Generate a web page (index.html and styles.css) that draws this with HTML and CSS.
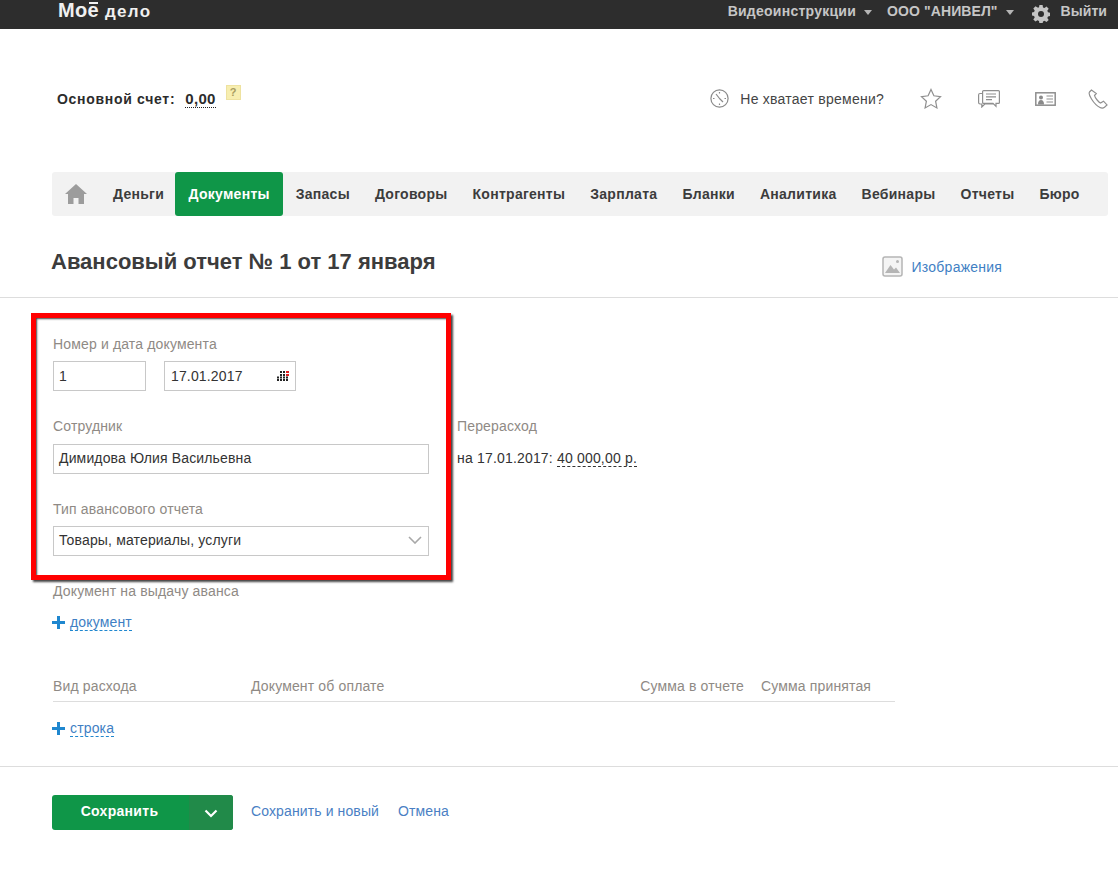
FILE: index.html
```html
<!DOCTYPE html>
<html lang="ru">
<head>
<meta charset="utf-8">
<title>Авансовый отчет</title>
<link rel="stylesheet" href="styles.css">
</head>
<body>
<header class="topbar">
  <div class="logo"><span class="logo-big">Мое</span><span class="logo-small">дело</span></div>
  <div class="top-right">
    <span class="top-link">Видеоинструкции</span><span class="caret"></span>
    <span class="top-link org">ООО "АНИВЕЛ"</span><span class="caret"></span>
    <svg class="gear" width="18" height="18" viewBox="0 0 18 18"><path fill="#c4c4c4" d="M7.400 0h3.200l.4 2.400 1.500.6 2-1.400 2.200 2.200-1.400 2 .7 1.500 2 .5v3.200l-2 .4-.7 1.500 1.400 2-2.200 2.200-2-1.400-1.500.7-.4 2.100H7.400L7 15.900l-1.500-.7-2 1.400-2.200-2.200 1.400-2-.6-1.500L0 10.600V7.400l2.100-.5.6-1.500-1.400-2 2.200-2.200 2 1.400L7 2.400z"/><circle cx="9" cy="9" r="3" fill="#2d2d2d"/></svg>
    <span class="top-link exit">Выйти</span>
  </div>
</header>

<section class="account">
  <div class="balance">
    <span class="balance-label">Основной счет:</span>
    <span class="balance-value">0,00</span>
    <span class="hint">?</span>
  </div>
  <div class="tools">
    <svg class="tool-clock" width="19" height="19" viewBox="0 0 19 19" fill="none" stroke="#8a8a8a" stroke-width="1.200"><circle cx="9.500" cy="9.500" r="8.600"/><path d="M9.500 9.500 6 5M9.500 9.500l3.500 3.500M9.500 3v1.500M3 9.500h1.500M9.500 14.500V16M14.500 9.500H16"/></svg>
    <span class="tool-text">Не хватает времени?</span>
    <svg class="tool-star" width="22" height="21" viewBox="0 0 22 21" fill="none" stroke="#8f8f8f" stroke-width="1.200"><path d="M11 1.500l2.900 6.300 6.600.8-4.900 4.600 1.300 6.700-5.900-3.300-5.900 3.300 1.300-6.700L1.500 8.600l6.600-.8z"/></svg>
    <svg class="tool-chat" width="22" height="18" viewBox="0 0 22 18" fill="none" stroke="#8f8f8f" stroke-width="1.200"><path d="M4.600 1.600A1 1 0 0 1 5.600.6h14.800a1 1 0 0 1 1 1v10.800a1 1 0 0 1-1 1h-2.400v3l-3-3H5.600a1 1 0 0 1-1-1z"/><path d="M8 4h10M8 6.800h10M8 9.600h6M4.600 3.500H2a1.400 1.400 0 0 0-1.400 1.400v7.700A1.400 1.400 0 0 0 2 14h1.800v3l3-3h8.400"/></svg>
    <svg class="tool-card" width="21" height="14" viewBox="0 0 21 14"><rect x=".8" y=".8" width="19.400" height="12.400" fill="none" stroke="#8f8f8f" stroke-width="1.500"/><circle cx="6" cy="5.500" r="2" fill="#8a8a8a"/><path fill="#8a8a8a" d="M3 12.500c0-3 1-4.500 3-4.500s3 1.500 3 4.500z"/><path stroke="#8f8f8f" d="M11.500 4h6.500M11.500 7h6.500M11.500 10h6.500"/></svg>
    <svg class="tool-phone" width="20" height="20" viewBox="0 0 20 20" fill="none" stroke="#8f8f8f" stroke-width="1.200"><path d="M3.500 1 1.500 3c-.8 1-.5 3 2 7s5.500 7 8.500 8.500c2 1 3.500.5 4.500-.3l2.500-2.300-3.500-3.700-3 1.800c-1.500-.5-5.500-5-6-7.500l1.800-2z"/></svg>
  </div>
</section>

<nav class="menu">
  <svg class="home" width="22" height="20" viewBox="0 0 22 20"><path fill="#9c9c9c" d="M11 0 22 10h-3v10h-5.500v-6h-5v6H3V10H0z"/></svg>
  <a class="menu-item">Деньги</a>
  <a class="menu-item active">Документы</a>
  <a class="menu-item">Запасы</a>
  <a class="menu-item">Договоры</a>
  <a class="menu-item">Контрагенты</a>
  <a class="menu-item">Зарплата</a>
  <a class="menu-item">Бланки</a>
  <a class="menu-item">Аналитика</a>
  <a class="menu-item">Вебинары</a>
  <a class="menu-item">Отчеты</a>
  <a class="menu-item">Бюро</a>
</nav>

<section class="title-row">
  <h1>Авансовый отчет № 1 от 17 января</h1>
  <a class="images">
    <svg width="21" height="21" viewBox="0 0 21 21"><rect x="1" y="1" width="19" height="19" rx="2" fill="#f4f4f4" stroke="#b5b5b5" stroke-width="1.500"/><path fill="#b5b5b5" d="M3 17l5.500-8 3.500 4.500 2-2 4 5.500z"/><circle cx="15.500" cy="5.500" r="1.500" fill="#b5b5b5"/></svg>
    <span>Изображения</span>
  </a>
</section>

<main class="form">
  <div class="form-group">
    <label class="field-label">Номер и дата документа</label>
    <div class="date-row">
      <div class="input input-num">1</div>
      <div class="input input-date">17.01.2017
        <svg class="cal" width="13" height="10" viewBox="0 0 13 10"><path fill="#222" d="M3 0h2v2H3zM6 0h2v2H6zM3 3h2v2H3zM6 3h2v2H6zM0 5.500h2v2H0zM3 5.500h2v2H3zM6 5.500h2v2H6zM9 5.500h2v2H9zM0 8h2v2H0zM3 8h2v2H3zM6 8h2v2H6zM9 8h2v2H9z"/><path fill="#e02020" d="M9 0h3v2H9zM9 3h3v2H9z"/></svg>
      </div>
    </div>
  </div>

  <div class="employee-row">
    <div class="employee">
      <label class="field-label">Сотрудник</label>
      <div class="input input-wide">Димидова Юлия Васильевна</div>
    </div>
    <div class="overrun">
      <label class="field-label">Перерасход</label>
      <div class="overrun-value">на 17.01.2017: <span class="dashed-dark">40 000,00 р.</span></div>
    </div>
  </div>

  <div class="type-group">
    <label class="field-label">Тип авансового отчета</label>
    <div class="input input-wide select">Товары, материалы, услуги
      <svg width="14" height="8" viewBox="0 0 14 8" fill="none" stroke="#a8a8a8" stroke-width="1.600"><path d="M1 1l6 6 6-6"/></svg>
    </div>
  </div>

  <div class="advance-group">
    <label class="field-label">Документ на выдачу аванса</label>
    <div class="add-row"><span class="plus"></span><a class="add-link">документ</a></div>
  </div>

  <div class="table-head">
    <span class="col-kind">Вид расхода</span>
    <span class="col-doc">Документ об оплате</span>
    <span class="col-sum">Сумма в отчете</span>
    <span class="col-acc">Сумма принятая</span>
  </div>
  <div class="add-row add-line"><span class="plus"></span><a class="add-link">строка</a></div>
</main>

<footer class="actions">
  <div class="save-btn">
    <span class="save-main">Сохранить</span>
    <span class="save-more"><svg width="14" height="9" viewBox="0 0 14 9" fill="none" stroke="#fff" stroke-width="2.200"><path d="M1.500 1.500 7 7l5.500-5.500"/></svg></span>
  </div>
  <a class="action-link">Сохранить и новый</a>
  <a class="action-link">Отмена</a>
</footer>

<div class="highlight"></div>
</body>
</html>
```
FILE: styles.css
```css
* { box-sizing: border-box; }
html, body { margin: 0; padding: 0; }
body {
  position: relative;
  height: 871px;
  overflow: hidden;
  background: #fff;
  color: #333;
  font: 14px/20px "Liberation Sans", Arial, sans-serif;
  letter-spacing: 0.15px;
}

.topbar {
  height: 29px;
  background: #2d2d2d;
  display: flex;
  justify-content: space-between;
  align-items: center;
  padding: 0 11px 0 58px;
}
.logo {
  display: flex;
  align-items: baseline;
  color: #f0f0f0;
  font-weight: bold;
  line-height: 22px;
  margin-top: -7px;
}
.logo-big {
  position: relative;
  font-size: 20px;
  letter-spacing: 0.3px;
}
.logo-big::before {
  content: "";
  position: absolute;
  right: 1px;
  top: -3px;
  width: 9px;
  height: 5px;
  border-top: 1px solid #f0f0f0;
  border-bottom: 2px solid #f0f0f0;
}
.logo-small {
  font-size: 17px;
  letter-spacing: 1.300px;
  margin-left: 6px;
}
.top-right { display: flex; align-items: center; margin-top: -8px; }
.top-link { color: #c6c6c6; font-weight: bold; font-size: 14px; letter-spacing: 0.25px; }
.org { margin-left: 15px; letter-spacing: 0.1px; }
.caret {
  width: 0; height: 0;
  margin: 3px 0 0 8px;
  border-left: 4px solid transparent;
  border-right: 4px solid transparent;
  border-top: 5px solid #b5b5b5;
}
.gear { margin: 6px 0 0 18px; }
.exit { margin-left: 11px; letter-spacing: 0.05px; }

.account {
  display: flex;
  justify-content: space-between;
  align-items: flex-start;
  padding: 53px 0 0 57px;
  height: 143px;
}
.balance { display: flex; align-items: flex-start; padding-top: 7px; }
.balance-label { font-weight: bold; color: #2c2c2c; letter-spacing: 0.7px; }
.balance-value {
  font-weight: bold;
  margin-left: 10px;
  color: #2c2c2c;
  font-size: 15px;
  height: 19px;
  border-bottom: 1px dotted #222;
  letter-spacing: 0.3px;
}
.hint {
  width: 15px; height: 15px;
  margin: -4px 0 0 10px;
  background: #f7eeb0;
  border: 1px solid #eee2a0;
  color: #a89c60;
  font-size: 11px;
  font-weight: bold;
  line-height: 13px;
  text-align: center;
}
.tools { display: flex; align-items: center; padding-top: 6px; margin-right: 10px; }
.tool-text { margin-left: 11px; color: #444; letter-spacing: 0.25px; }
.tool-star { margin-left: 36px; }
.tool-chat { margin-left: 36px; }
.tool-card { margin-left: 35px; }
.tool-phone { margin-left: 32px; }

.menu {
  margin: 0 10px 0 52px;
  height: 44px;
  background: #f2f2f2;
  border-radius: 3px;
  display: flex;
  align-items: stretch;
}
.home { margin: 12px 26px 0 13px; }
.menu-item {
  font-weight: bold;
  color: #3c3c3c;
  line-height: 44px;
  padding: 0 12.500px;
  letter-spacing: 0.28px;
}
.menu-item:nth-of-type(1) { padding: 0 11px 0 0; }
.menu-item.active {
  background: #0f9648;
  color: #fff;
  border-radius: 3px;
  padding: 0 13.400px;
}

.title-row {
  height: 82px;
  border-bottom: 1px solid #ddd;
  display: flex;
  padding: 33px 0 0 51px;
}
h1 {
  margin: 0;
  font-size: 22px;
  line-height: 26px;
  color: #3c3c3c;
  font-weight: bold;
  letter-spacing: 0;
}
.images {
  display: flex;
  align-items: center;
  align-self: flex-start;
  gap: 8px;
  margin: 7px 0 0 447px;
  color: #3f7fc4;
  letter-spacing: 0.25px;
}

.form { padding: 36px 0 0 53px; height: 468px; }
.field-label { display: block; color: #8f8a85; line-height: 20px; }
.date-row { display: flex; gap: 18px; margin-top: 7px; }
.input {
  height: 30px;
  border: 1px solid #c8c8c8;
  padding: 0 5px;
  line-height: 28px;
  color: #333;
  background: #fff;
}
.input-num { width: 93px; }
.input-date { width: 132px; padding-left: 6px; display: flex; justify-content: space-between; align-items: center; }
.employee-row { display: flex; margin-top: 25px; }
.employee { width: 404px; }
.input-wide { width: 376px; margin-top: 8px; line-height: 26px; }
.overrun-value { margin-top: 12px; color: #333; letter-spacing: 0.18px; }
.dashed-dark { border-bottom: 1px dashed #333; }
.type-group { margin-top: 25px; }
.select {
  display: flex;
  justify-content: space-between;
  align-items: center;
  margin-top: 7px;
  padding-right: 6px;
  padding-bottom: 2px;
}
.advance-group { margin-top: 25px; }
.add-row { display: flex; align-items: center; margin: 11px 0 0 -1px; height: 20px; }
.plus {
  width: 13px; height: 13px;
  margin-right: 5px;
  background:
    linear-gradient(#1f87cf, #1f87cf) center / 100% 3px no-repeat,
    linear-gradient(#1f87cf, #1f87cf) center / 3px 100% no-repeat;
}
.add-link { color: #3f7fc4; border-bottom: 1px dashed #1f87cf; line-height: 16px; }
.table-head {
  display: flex;
  width: 842px;
  height: 26px;
  margin-top: 44px;
  border-bottom: 1px solid #ddd;
  color: #8f8a85;
  line-height: 20px;
}
.col-kind { width: 198px; }
.col-doc { width: 376px; }
.col-sum { flex: none; width: 134px; text-align: right; padding-right: 17px; white-space: nowrap; }
.col-acc { white-space: nowrap; }
.add-line { margin-top: 16px; }

.actions {
  border-top: 1px solid #ddd;
  padding: 28px 0 0 52px;
  display: flex;
  align-items: center;
  gap: 19px;
}
.save-btn {
  display: flex;
  height: 35px;
  width: 181px;
  border-radius: 3px;
  overflow: hidden;
  background: #0f9648;
  color: #fff;
  font-weight: bold;
  line-height: 33px;
  letter-spacing: 0.3px;
}
.save-main { width: 137px; padding-right: 2px; text-align: center; }
.save-more { width: 44px; background: #218a49; display: flex; align-items: center; justify-content: center; padding-top: 1px; }
.action-link { color: #4a7fc4; padding-bottom: 4px; letter-spacing: 0.12px; }
.save-btn + .action-link { margin-left: -1px; }

.highlight {
  position: absolute;
  left: 31px;
  top: 313px;
  width: 420px;
  height: 267px;
  border: 5px solid #f00;
  box-shadow: 2px 2px 2px #444, inset 2px 2px 2px -1px #444;
  pointer-events: none;
}
```
